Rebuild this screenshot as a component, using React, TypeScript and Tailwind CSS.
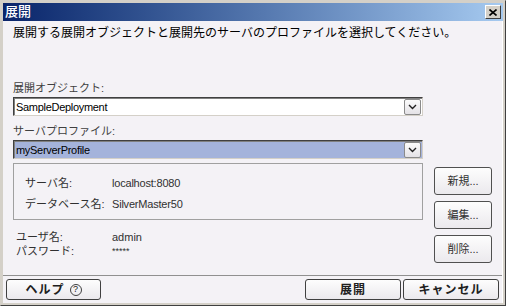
import React from 'react'

const jp = { fontFamily: '"Liberation Sans", "Noto Sans CJK JP", sans-serif' }

function DropArrow() {
  return (
    <div className="w-[17px] h-[16px] mr-[1px] rounded-[2px] border border-[#8a8a8a] bg-gradient-to-b from-[#fbfbfb] to-[#e4e2e6] flex items-center justify-center">
      <svg width="9" height="6" viewBox="0 0 9 6">
        <path d="M1 1 L4.5 4.5 L8 1" stroke="#202020" strokeWidth="1.4" fill="none" />
      </svg>
    </div>
  )
}

function Combo({ value, selected }: { value: string; selected?: boolean }) {
  return (
    <div
      className={`h-[19px] w-[410px] flex items-center border border-t-[#404040] border-l-[#404040] border-b-[#d4d0c8] border-r-[#d4d0c8] shadow-[inset_1px_1px_0_#808080] ${
        selected ? 'bg-[#a4b3db]' : 'bg-white'
      }`}
    >
      <div className="flex-1 pl-[2px] text-[11px] leading-[14px] tracking-[-0.3px] text-black">{value}</div>
      <DropArrow />
    </div>
  )
}

function SideButton({ label }: { label: string }) {
  return (
    <div className="w-[58px] h-[28px] rounded-[3px] border border-[#505050] bg-gradient-to-b from-[#fdfdfd] to-[#ebe9ed] flex items-center justify-center text-[11px] text-[#303030]">
      {label}
    </div>
  )
}

function FooterButton({ children, w }: { children: React.ReactNode; w: string }) {
  return (
    <div
      className={`${w} h-[21px] rounded-[3px] border border-[#404040] bg-gradient-to-b from-[#fdfdfd] to-[#ebe9ed] flex items-center justify-center text-[12px] font-bold tracking-[1px] text-[#202020]`}
    >
      {children}
    </div>
  )
}

export default function App() {
  return (
    <div
      className="w-[506px] h-[306px] bg-[#d4d0c8] border border-t-[#d4d0c8] border-l-[#d4d0c8] border-r-[#404040] border-b-[#404040] p-[2px] flex flex-col"
      style={jp}
    >
      {/* title bar */}
      <div className="h-[18px] bg-gradient-to-r from-[#0a246a] to-[#a6caf0] flex items-center justify-between pl-[2px] pr-[2px]">
        <span className="text-white text-[13px] leading-[16px] font-medium">展開</span>
        <div className="w-[16px] h-[14px] bg-[#d4d0c8] border border-t-white border-l-white border-r-[#404040] border-b-[#404040] flex items-center justify-center">
          <svg width="8" height="7" viewBox="0 0 8 7">
            <path d="M0.5 0.5 L7.5 6.5 M7.5 0.5 L0.5 6.5" stroke="#000" strokeWidth="1.6" />
          </svg>
        </div>
      </div>

      {/* body */}
      <div className="flex-1 bg-[#f4f2f6] flex flex-col border-r border-r-white">
        <div className="h-[254px] flex flex-col pl-[10px]">
          <div className="pt-[4px] text-[12px] leading-[17px] text-black">
            展開する展開オブジェクトと展開先のサーバのプロファイルを選択してください。
          </div>

          <div className="mt-[39px] text-[11px] leading-[14px] text-[#404040]">展開オブジェクト:</div>
          <div className="mt-[2px]">
            <Combo value="SampleDeployment" />
          </div>

          <div className="mt-[8px] text-[11px] leading-[14px] text-[#404040]">サーバプロファイル:</div>
          <div className="mt-[2px]">
            <Combo value="myServerProfile" selected />
          </div>

          <div className="mt-[4px] flex">
            <div className="w-[410px] flex flex-col">
              <div className="h-[57px] border border-[#a0a0a0] pl-[11px] pt-[12px] text-[11px] leading-[14px] text-[#303030]">
                <div className="flex">
                  <span className="w-[87px]">サーバ名:</span>
                  <span className="tracking-[-0.2px]">localhost:8080</span>
                </div>
                <div className="flex mt-[7px]">
                  <span className="w-[87px]">データベース名:</span>
                  <span className="tracking-[-0.2px]">SilverMaster50</span>
                </div>
              </div>
              <div className="mt-[10px] pl-[3px] text-[11px] leading-[14px] text-[#303030]">
                <div className="flex">
                  <span className="w-[96px]">ユーザ名:</span>
                  <span>admin</span>
                </div>
                <div className="flex">
                  <span className="w-[96px]">パスワード:</span>
                  <span className="text-[9px]">*****</span>
                </div>
              </div>
            </div>
            <div className="ml-[11px] mt-[4px] flex flex-col gap-[6px]">
              <SideButton label="新規..." />
              <SideButton label="編集..." />
              <SideButton label="削除..." />
            </div>
          </div>
        </div>

        {/* footer */}
        <div className="flex-1 border-t border-t-[#909090] flex items-center justify-between px-[3px]">
          <FooterButton w="w-[95px]">
            <span className="flex items-center gap-[5px]">
              ヘルプ
              <span className="w-[12px] h-[12px] rounded-full border border-[#404040] flex items-center justify-center text-[9px] font-normal tracking-normal leading-none">
                ?
              </span>
            </span>
          </FooterButton>
          <div className="flex gap-[2px]">
            <FooterButton w="w-[96px]">展開</FooterButton>
            <FooterButton w="w-[96px]">キャンセル</FooterButton>
          </div>
        </div>
      </div>
    </div>
  )
}
